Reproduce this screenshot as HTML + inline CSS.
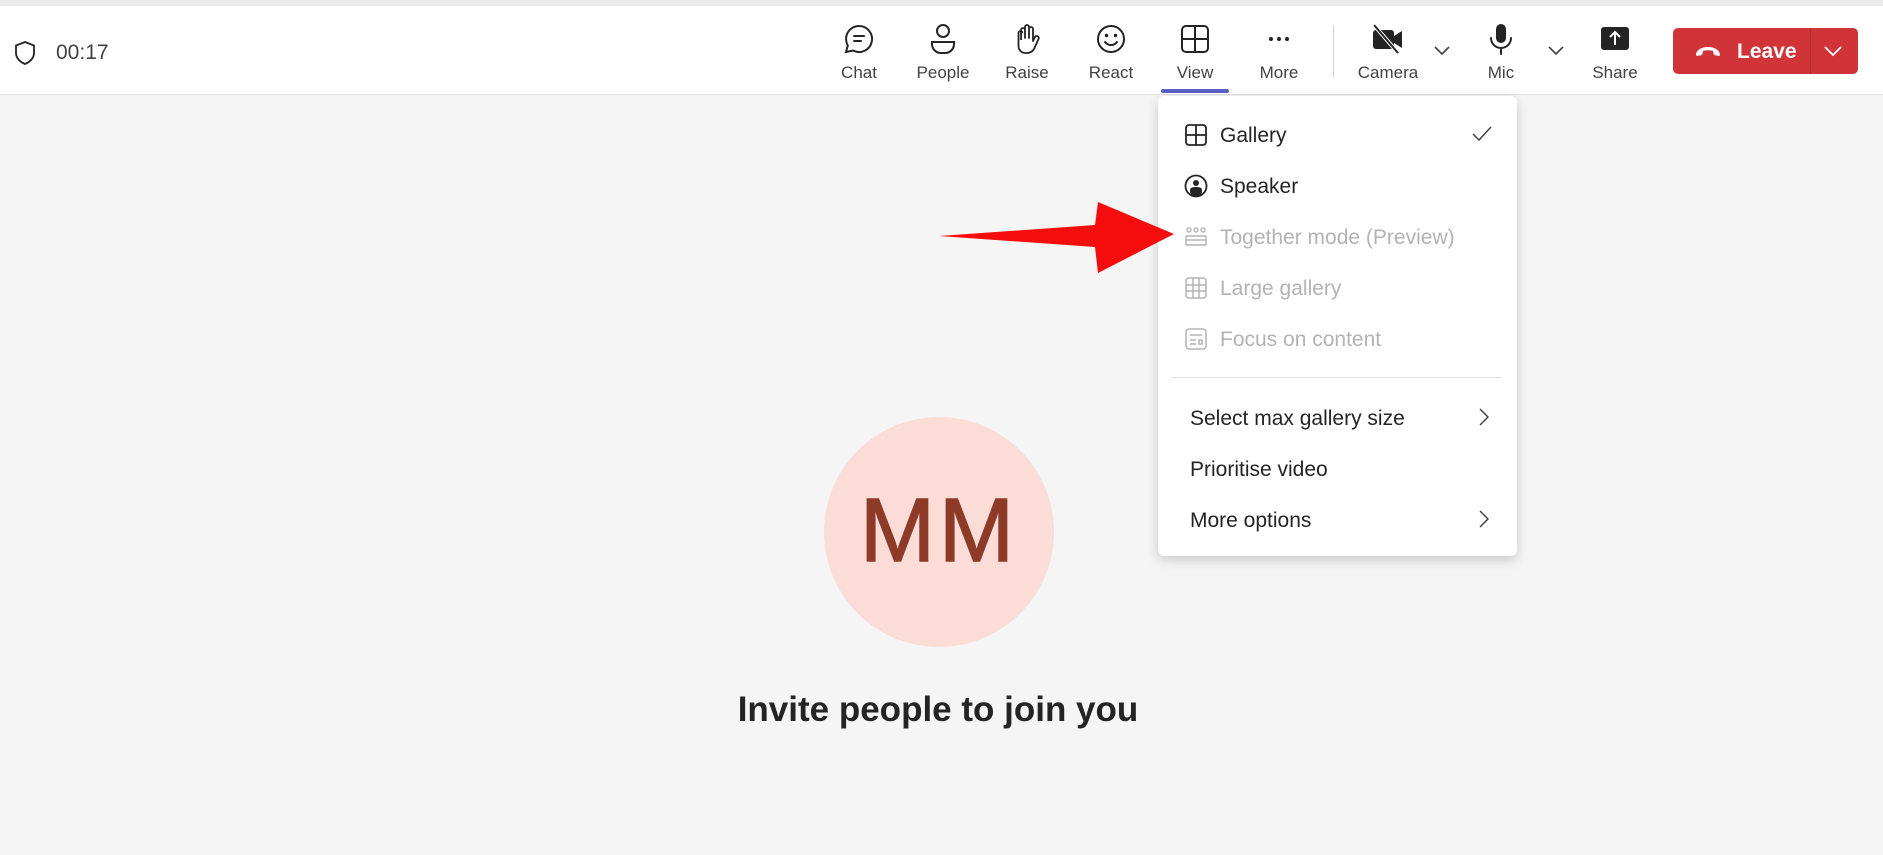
<!DOCTYPE html>
<html><head><meta charset="utf-8"><style>
*{margin:0;padding:0;box-sizing:border-box}
body{width:1883px;height:855px;background:#f5f5f5;font-family:"Liberation Sans",sans-serif;position:relative;overflow:hidden;color:#242424}
.top{position:absolute;left:0;top:0;width:1883px;height:6px;background:#ebebeb}
.bar{position:absolute;left:0;top:6px;width:1883px;height:89px;background:#fff;border-bottom:1px solid #e0e0e0}
.abs{position:absolute}
.lbl{position:absolute;font-size:17px;color:#424242;transform:translateX(-50%);top:63px;white-space:nowrap}
.ic{position:absolute;transform:translateX(-50%);top:22px}
.menu{position:absolute;left:1158px;top:96px;width:359px;height:460px;background:#fff;border-radius:6px;box-shadow:0 4px 12px rgba(0,0,0,.18)}
.mi{position:absolute;font-size:21px;white-space:nowrap}
.dis{color:#b3b3b3}
</style></head><body>
<div class="top"></div>
<div class="bar"></div>
<svg class="abs" style="left:13px;top:40px" width="24" height="26" viewBox="0 0 24 26"><path d="M12 2 L21 5.5 V13 C21 18 17 22 12 24 C7 22 3 18 3 13 V5.5 Z" fill="none" stroke="#242424" stroke-width="1.8"/></svg>
<div class="abs" style="left:56px;top:41px;font-size:21px;color:#424242">00:17</div>

<svg class="ic" style="left:859px" width="34" height="34" viewBox="0 0 34 34"><path d="M17 4a13 13 0 1 1-6 24.5L4 30l1.8-6.5A13 13 0 0 1 17 4z" fill="none" stroke="#242424" stroke-width="2"/><path d="M12 14h10M12 19h7" stroke="#242424" stroke-width="2" stroke-linecap="round"/></svg>
<div class="lbl" style="left:859px">Chat</div>
<svg class="ic" style="left:943px" width="34" height="34" viewBox="0 0 34 34"><circle cx="17" cy="9" r="6" fill="none" stroke="#242424" stroke-width="2"/><path d="M6 20h22v2a9 9 0 0 1-9 9h-4a9 9 0 0 1-9-9z" fill="none" stroke="#242424" stroke-width="2"/></svg>
<div class="lbl" style="left:943px">People</div>
<svg class="ic" style="left:1027px" width="34" height="34" viewBox="0 0 34 34"><path d="M11 18V8a2 2 0 0 1 4 0v8V5a2 2 0 0 1 4 0v11V7a2 2 0 0 1 4 0v12l2-4a2 2 0 0 1 3.5 2l-4 9a8 8 0 0 1-8 5h-1a7 7 0 0 1-7-7V11a2 2 0 0 1 4 0" fill="none" stroke="#242424" stroke-width="1.8" stroke-linejoin="round"/></svg>
<div class="lbl" style="left:1027px">Raise</div>
<svg class="ic" style="left:1111px" width="34" height="34" viewBox="0 0 34 34"><circle cx="17" cy="17" r="13" fill="none" stroke="#242424" stroke-width="2"/><circle cx="12.5" cy="13.5" r="1.7" fill="#242424"/><circle cx="21.5" cy="13.5" r="1.7" fill="#242424"/><path d="M11 20c3 4 9 4 12 0" fill="none" stroke="#242424" stroke-width="2" stroke-linecap="round"/></svg>
<div class="lbl" style="left:1111px">React</div>
<svg class="ic" style="left:1195px" width="34" height="34" viewBox="0 0 34 34"><rect x="4" y="4" width="26" height="26" rx="4" fill="none" stroke="#242424" stroke-width="2"/><path d="M17 4v26M4 17h26" stroke="#242424" stroke-width="2"/></svg>
<div class="lbl" style="left:1195px">View</div>
<div class="abs" style="left:1161px;top:89px;width:68px;height:4px;background:#5b5fc7;border-radius:2px"></div>
<svg class="ic" style="left:1279px" width="34" height="34" viewBox="0 0 34 34"><circle cx="9" cy="17" r="2" fill="#242424"/><circle cx="17" cy="17" r="2" fill="#242424"/><circle cx="25" cy="17" r="2" fill="#242424"/></svg>
<div class="lbl" style="left:1279px">More</div>
<div class="abs" style="left:1333px;top:25px;width:1px;height:52px;background:#d1d1d1"></div>
<svg class="ic" style="left:1388px" width="36" height="34" viewBox="0 0 36 34"><rect x="3" y="8" width="21" height="19" rx="3" fill="#242424"/><path d="M24 14l8-5v17l-8-5z" fill="#242424"/><path d="M4 3l24 28" stroke="#fff" stroke-width="4"/><path d="M4 3l24 28" stroke="#242424" stroke-width="2"/></svg>
<div class="lbl" style="left:1388px">Camera</div>
<svg class="abs" style="left:1434px;top:46px" width="16" height="10" viewBox="0 0 16 10"><path d="M1 1l7 7 7-7" fill="none" stroke="#424242" stroke-width="1.6"/></svg>
<svg class="ic" style="left:1501px" width="34" height="34" viewBox="0 0 34 34"><rect x="12" y="2" width="10" height="19" rx="5" fill="#242424"/><path d="M7 16a10 10 0 0 0 20 0M17 26v6" fill="none" stroke="#242424" stroke-width="2" stroke-linecap="round"/></svg>
<div class="lbl" style="left:1501px">Mic</div>
<svg class="abs" style="left:1548px;top:46px" width="16" height="10" viewBox="0 0 16 10"><path d="M1 1l7 7 7-7" fill="none" stroke="#424242" stroke-width="1.6"/></svg>
<svg class="ic" style="left:1615px" width="34" height="34" viewBox="0 0 34 34"><rect x="3" y="5" width="28" height="23" rx="3" fill="#242424"/><path d="M17 23V11M12 15l5-5 5 5" fill="none" stroke="#fff" stroke-width="2"/></svg>
<div class="lbl" style="left:1615px">Share</div>
<div class="abs" style="left:1673px;top:28px;width:185px;height:46px;border-radius:5px;background:#d13438"></div>
<div class="abs" style="left:1810px;top:28px;width:1px;height:46px;background:#b02a2e"></div>
<svg class="abs" style="left:1694px;top:44px" width="28" height="14" viewBox="0 0 28 14"><path d="M2 11c0-5 6-8 12-8s12 3 12 8l-1 1-5-1-1-4c-3-1-7-1-10 0l-1 4-5 1z" fill="#fff"/></svg>
<div class="abs" style="left:1737px;top:40px;font-size:21px;color:#fff;font-weight:bold">Leave</div>
<svg class="abs" style="left:1824px;top:46px" width="18" height="11" viewBox="0 0 18 11"><path d="M1 1l8 8 8-8" fill="none" stroke="#fff" stroke-width="1.8"/></svg>

<div class="menu">
<svg class="abs" style="left:27px;top:28px" width="22" height="22" viewBox="0 0 22 22"><rect x="1" y="1" width="20" height="20" rx="3" fill="none" stroke="#242424" stroke-width="1.8"/><path d="M11 1v20M1 11h20" stroke="#242424" stroke-width="1.8"/></svg>
<div class="mi" style="left:62px;top:28px">Gallery</div>
<svg class="abs" style="left:314px;top:30px" width="20" height="16" viewBox="0 0 20 16"><path d="M1 8l6 6L19 1" fill="none" stroke="#424242" stroke-width="1.5"/></svg>
<svg class="abs" style="left:26px;top:78px" width="24" height="24" viewBox="0 0 24 24"><circle cx="12" cy="12" r="10.5" fill="none" stroke="#242424" stroke-width="1.8"/><circle cx="12" cy="9" r="3" fill="#242424"/><path d="M6 16c0-2 2-3 6-3s6 1 6 3v1a6 6 0 0 1-12 0z" fill="#242424"/></svg>
<div class="mi" style="left:62px;top:79px">Speaker</div>
<svg class="abs" style="left:26px;top:130px" width="24" height="22" viewBox="0 0 24 22"><g fill="none" stroke="#b3b3b3" stroke-width="1.4"><circle cx="5" cy="4" r="2"/><circle cx="12" cy="4" r="2"/><circle cx="19" cy="4" r="2"/><path d="M2 10h20M2 10v9h20v-9M2 14h20"/></g></svg>
<div class="mi dis" style="left:62px;top:130px">Together mode (Preview)</div>
<svg class="abs" style="left:27px;top:181px" width="22" height="22" viewBox="0 0 22 22"><g fill="none" stroke="#b3b3b3" stroke-width="1.5"><rect x="1" y="1" width="20" height="20" rx="3"/><path d="M8 1v20M14 1v20M1 8h20M1 14h20"/></g></svg>
<div class="mi dis" style="left:62px;top:181px">Large gallery</div>
<svg class="abs" style="left:27px;top:232px" width="22" height="22" viewBox="0 0 22 22"><g fill="none" stroke="#b3b3b3" stroke-width="1.5"><rect x="1" y="1" width="20" height="20" rx="3"/><path d="M5 7h12M5 12h6M5 16h6M14 12h3v4h-3z"/></g></svg>
<div class="mi dis" style="left:62px;top:232px">Focus on content</div>
<div class="abs" style="left:14px;top:281px;width:330px;height:1px;background:#e0e0e0"></div>
<div class="mi" style="left:32px;top:311px">Select max gallery size</div>
<svg class="abs" style="left:321px;top:312px" width="10" height="18" viewBox="0 0 10 18"><path d="M1 1l8 8-8 8" fill="none" stroke="#424242" stroke-width="1.5"/></svg>
<div class="mi" style="left:32px;top:362px">Prioritise video</div>
<div class="mi" style="left:32px;top:413px">More options</div>
<svg class="abs" style="left:321px;top:414px" width="10" height="18" viewBox="0 0 10 18"><path d="M1 1l8 8-8 8" fill="none" stroke="#424242" stroke-width="1.5"/></svg>
</div>

<svg class="abs" style="left:930px;top:195px" width="250" height="85" viewBox="0 0 250 85"><path d="M9 41 L165 30 L168 7 L244 39 L168 78 L165 52 Z" fill="#f50d0d"/></svg>

<div class="abs" style="left:824px;top:417px;width:230px;height:230px;border-radius:50%;background:#fbdcd6"></div>
<div class="abs" style="left:824px;top:480px;width:230px;text-align:center;font-size:90px;color:#8e3a28;letter-spacing:4px;-webkit-text-stroke:1.5px #8e3a28">MM</div>
<div class="abs" style="left:600px;top:690px;width:676px;text-align:center;font-size:35px;font-weight:bold;color:#242424">Invite people to join you</div>
</body></html>
